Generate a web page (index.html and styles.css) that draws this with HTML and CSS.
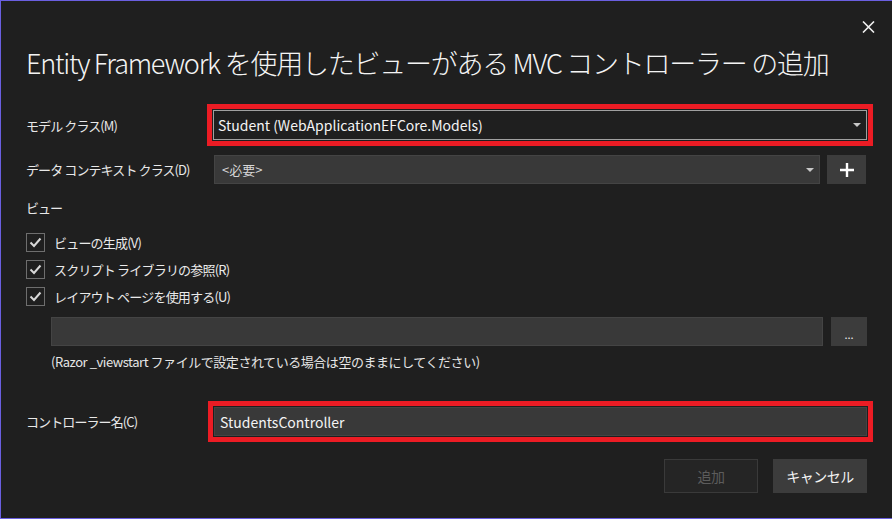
FILE: index.html
```html
<!DOCTYPE html>
<html lang="ja">
<head>
<meta charset="utf-8">
<link rel="stylesheet" href="styles.css">
</head>
<body>
<div class="dialog">
  <div class="topbar">
    <button class="close" aria-label="閉じる">
      <svg width="13" height="12" viewBox="0 0 13 12"><path d="M1 0.5 L12 11.5 M12 0.5 L1 11.5" stroke="#f0f0f0" stroke-width="1.6" fill="none"/></svg>
    </button>
  </div>
  <h1 class="title">Entity Framework を使用したビューがある MVC コントローラー の追加</h1>

  <div class="row row-model">
    <label class="label">モデル クラス(M)</label>
    <div class="combo combo-focus highlight">
      <span class="combo-text">Student (WebApplicationEFCore.Models)</span>
      <span class="arrow"></span>
    </div>
  </div>

  <div class="row row-context">
    <label class="label">データ コンテキスト クラス(D)</label>
    <div class="combo combo-grey">
      <span class="combo-text muted">&lt;必要&gt;</span>
      <span class="arrow"></span>
    </div>
    <button class="btn-plus" aria-label="追加">
      <svg width="14" height="14" viewBox="0 0 14 14"><path d="M7 0 V14 M0 7 H14" stroke="#ffffff" stroke-width="2.4" fill="none"/></svg>
    </button>
  </div>

  <div class="section">ビュー</div>

  <div class="checks">
    <div class="check"><span class="box"><svg width="13" height="11" viewBox="0 0 13 11"><path d="M1.5 5.5 L5 9 L11.5 1.5" stroke="#d8d8d8" stroke-width="2" fill="none"/></svg></span><span>ビューの生成(V)</span></div>
    <div class="check"><span class="box"><svg width="13" height="11" viewBox="0 0 13 11"><path d="M1.5 5.5 L5 9 L11.5 1.5" stroke="#d8d8d8" stroke-width="2" fill="none"/></svg></span><span>スクリプト ライブラリの参照(R)</span></div>
    <div class="check"><span class="box"><svg width="13" height="11" viewBox="0 0 13 11"><path d="M1.5 5.5 L5 9 L11.5 1.5" stroke="#d8d8d8" stroke-width="2" fill="none"/></svg></span><span>レイアウト ページを使用する(U)</span></div>
  </div>

  <div class="layout-row">
    <div class="textbox textbox-layout"></div>
    <button class="btn-browse">...</button>
  </div>
  <div class="hint">(Razor _viewstart ファイルで設定されている場合は空のままにしてください)</div>

  <div class="row row-controller">
    <label class="label">コントローラー名(C)</label>
    <div class="textbox textbox-name highlight">StudentsController</div>
  </div>

  <div class="actions">
    <button class="btn btn-disabled">追加</button>
    <button class="btn btn-cancel">キャンセル</button>
  </div>
</div>
</body>
</html>
```

FILE: styles.css
```css
* { box-sizing: border-box; }
html, body {
  margin: 0;
  padding: 0;
  background: #1f1f1f;
}
body {
  width: 892px;
  height: 519px;
  overflow: hidden;
  font-family: "Noto Sans CJK JP", "Noto Sans", sans-serif;
  color: #f1f1f1;
  font-size: 13px;
}
.dialog {
  height: 519px;
  border-left: 1px solid #6a5fe0;
  border-top: 1px solid #6a5fe0;
  border-bottom: 1px solid #6a5fe0;
  padding: 0 25px 0 25px;
  display: flex;
  flex-direction: column;
}
.topbar {
  height: 42px;
  display: flex;
  justify-content: flex-end;
  align-items: flex-start;
}
.close {
  margin-top: 20px;
  margin-right: -8px;
  background: none;
  border: 0;
  padding: 0;
  width: 13px;
  height: 12px;
  display: flex;
}
.title {
  margin: 0;
  height: 40px;
  line-height: 40px;
  font-size: 27px;
  font-weight: 300;
  letter-spacing: -1.25px;
  color: #f4f4f4;
  white-space: nowrap;
}
.row {
  display: flex;
  align-items: center;
}
.label {
  width: 188px;
  flex: none;
  color: #e8e8e8;
  font-size: 13px;
  letter-spacing: -0.9px;
  white-space: nowrap;
}
.row-model { margin-top: 27px; height: 30px; }
.row-model .label { width: 187px; }
.row-context { margin-top: 15px; height: 29px; }
.combo {
  position: relative;
  display: flex;
  align-items: center;
  height: 100%;
  padding: 0 4px;
}
.combo-focus {
  flex: 1;
  background: #1f1f1f;
  border: 1px solid #a0a0a0;
}
.combo-grey {
  width: 606px;
  background: #393939;
  border: 1px solid #444444;
  padding-left: 7px;
}
.highlight {
  outline: 5px solid #ec1c24;
  outline-offset: 1px;
}
.combo-text {
  flex: 1;
  font-size: 14px;
  color: #f4f4f4;
  white-space: nowrap;
}
.combo-text.muted { color: #d6d6d6; font-size: 13px; }
.arrow {
  width: 0;
  height: 0;
  border-left: 4px solid transparent;
  border-right: 4px solid transparent;
  border-top: 4px solid #c8c8c8;
  margin-right: 1px;
}
.btn-plus {
  margin-left: 7px;
  width: 39px;
  height: 29px;
  background: #3c3c3c;
  border: 0;
  display: flex;
  align-items: center;
  justify-content: center;
  padding: 0;
}
.section {
  margin-top: 14px;
  height: 20px;
  line-height: 20px;
  color: #e8e8e8;
  letter-spacing: -1px;
}
.checks {
  margin-top: 15px;
  display: flex;
  flex-direction: column;
  gap: 8px;
}
.check {
  height: 19px;
  display: flex;
  align-items: center;
  gap: 9px;
  color: #eaeaea;
  letter-spacing: -0.8px;
  white-space: nowrap;
}
.box {
  width: 19px;
  height: 19px;
  flex: none;
  border: 1px solid #6e6e6e;
  display: flex;
  align-items: center;
  justify-content: center;
}
.layout-row {
  margin-top: 11px;
  margin-left: 25px;
  display: flex;
  height: 29px;
  gap: 8px;
}
.textbox {
  background: #393939;
  border: 1px solid #444444;
}
.textbox-layout { flex: 1; }
.btn-browse {
  width: 36px;
  background: #3c3c3c;
  border: 0;
  color: #f0f0f0;
  font-family: inherit;
  font-size: 11px;
  padding: 4px 0 0 0;
}
.hint {
  margin-top: 6px;
  margin-left: 25px;
  height: 20px;
  line-height: 20px;
  color: #e6e6e6;
  white-space: nowrap;
  letter-spacing: -0.45px;
}
.row-controller { margin-top: 35px; height: 29px; }
.row-controller .label { width: 188px; }
.textbox-name {
  flex: 1;
  height: 29px;
  display: flex;
  align-items: center;
  padding-left: 5px;
  font-size: 14px;
  color: #f4f4f4;
}
.actions {
  margin-top: 23px;
  display: flex;
  justify-content: flex-end;
  gap: 15px;
}
.btn {
  width: 94px;
  height: 34px;
  font-family: inherit;
  font-size: 14px;
  padding: 0;
  letter-spacing: -0.5px;
}
.btn-disabled {
  background: #252525;
  border: 1px solid #3a3a3a;
  color: #5c5c5c;
}
.btn-cancel {
  background: #3c3c3c;
  border: 0;
  color: #f4f4f4;
}
```
